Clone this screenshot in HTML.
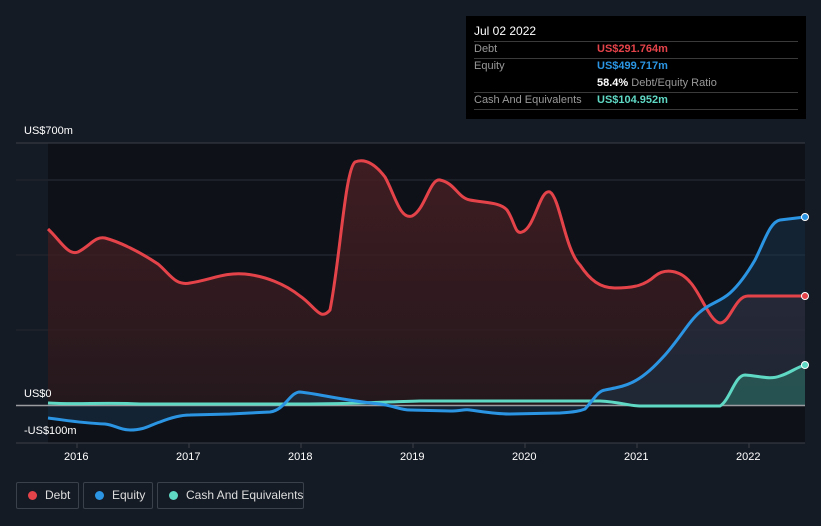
<!DOCTYPE html>
<html><head><meta charset="utf-8"><style>
html,body{margin:0;width:821px;height:526px;overflow:hidden}
body{background:#151b25;font-family:"Liberation Sans",sans-serif;position:relative}
.t{position:absolute;color:#fff;font-size:11px;white-space:nowrap}
.lg{position:absolute;top:482px;height:27px;border:1px solid #3a414b;border-radius:2px;box-sizing:border-box;color:#ddd;font-size:12px;line-height:25px;white-space:nowrap}
.lg i{position:absolute;left:11px;top:8px;width:9px;height:9px;border-radius:50%}
</style></head><body>
<svg width="821" height="526" style="position:absolute;left:0;top:0">
<rect x="48" y="143" width="757" height="300" fill="#0e1218"/>
<line x1="16" y1="143" x2="805" y2="143" stroke="#3a3f47" stroke-width="1"/>
<g stroke="#20252d" stroke-width="1.5"><line x1="16" y1="180" x2="805" y2="180"/><line x1="16" y1="255" x2="805" y2="255"/><line x1="16" y1="330" x2="805" y2="330"/></g>
<line x1="16" y1="443" x2="805" y2="443" stroke="#3a3f47"/>
<g stroke="#3a3f47"><line x1="77" y1="443" x2="77" y2="448"/><line x1="189" y1="443" x2="189" y2="448"/><line x1="301" y1="443" x2="301" y2="448"/><line x1="413" y1="443" x2="413" y2="448"/><line x1="525" y1="443" x2="525" y2="448"/><line x1="637" y1="443" x2="637" y2="448"/><line x1="749" y1="443" x2="749" y2="448"/></g>
<defs><linearGradient id="dg" x1="0" y1="0" x2="0" y2="1"><stop offset="0" stop-color="#4a1f24" stop-opacity=".8"/><stop offset="1" stop-color="#2a1a1e" stop-opacity=".8"/></linearGradient></defs>
<path d="M48,229 C60,240 68,256 78,252 C90,246 95,236 105,238 C120,242 140,252 158,264 C170,274 175,286 190,283 C210,280 225,272 245,274 C265,276 285,284 300,296 C315,306 320,322 330,310 C340,260 345,170 355,162 C365,158 375,164 385,177 C395,195 400,220 412,216 C425,210 430,178 440,180 C455,183 458,198 470,200 C485,203 500,202 507,210 C515,222 515,235 522,232 C535,228 540,188 550,192 C560,198 565,250 580,265 C590,280 600,288 615,288 C635,288 645,285 655,276 C665,268 680,270 690,282 C700,292 710,322 720,323 C730,323 735,296 748,296 L805,296 L805,405 L48,405 Z" fill="url(#dg)"/>
<path d="M48,418 C65,420 80,423 105,424 C115,425 120,430 130,430 C145,430 150,425 160,422 C170,418 180,415 190,415 L230,414 L270,412 C285,410 290,392 300,392 C320,394 340,400 380,404 C395,406 400,410 410,410 L450,411 C460,411 465,409 470,410 C485,412 495,414 510,414 L560,413 C575,412 580,411 585,409 C595,398 598,391 605,390 C620,387 625,386 633,382 C645,376 655,366 665,355 C680,338 690,320 700,312 C710,303 720,302 730,293 C740,284 748,272 755,260 C765,240 770,222 780,220 L805,217 L805,405 L48,405 Z" fill="#1b3a55" fill-opacity=".45"/>
<path d="M720,406 C730,400 735,375 745,375 C760,376 770,380 780,376 C790,373 795,368 805,365 L805,405 L720,405 Z" fill="#2d6f66" fill-opacity=".6"/>
<line x1="16" y1="405.5" x2="805" y2="405.5" stroke="#9a9ca0" stroke-width="1.5"/>
<path d="M48,229 C60,240 68,256 78,252 C90,246 95,236 105,238 C120,242 140,252 158,264 C170,274 175,286 190,283 C210,280 225,272 245,274 C265,276 285,284 300,296 C315,306 320,322 330,310 C340,260 345,170 355,162 C365,158 375,164 385,177 C395,195 400,220 412,216 C425,210 430,178 440,180 C455,183 458,198 470,200 C485,203 500,202 507,210 C515,222 515,235 522,232 C535,228 540,188 550,192 C560,198 565,250 580,265 C590,280 600,288 615,288 C635,288 645,285 655,276 C665,268 680,270 690,282 C700,292 710,322 720,323 C730,323 735,296 748,296 L805,296" fill="none" stroke="#e5434a" stroke-width="3"/>
<path d="M48,403 C80,405 100,402 140,404 L300,404 C350,404 380,402 420,401 L600,401 C620,402 630,406 640,406 L720,406 C730,400 735,375 745,375 C760,376 770,380 780,376 C790,373 795,368 805,365" fill="none" stroke="#5fd8c4" stroke-width="3"/>
<path d="M48,418 C65,420 80,423 105,424 C115,425 120,430 130,430 C145,430 150,425 160,422 C170,418 180,415 190,415 L230,414 L270,412 C285,410 290,392 300,392 C320,394 340,400 380,404 C395,406 400,410 410,410 L450,411 C460,411 465,409 470,410 C485,412 495,414 510,414 L560,413 C575,412 580,411 585,409 C595,398 598,391 605,390 C620,387 625,386 633,382 C645,376 655,366 665,355 C680,338 690,320 700,312 C710,303 720,302 730,293 C740,284 748,272 755,260 C765,240 770,222 780,220 L805,217" fill="none" stroke="#2b95e3" stroke-width="3"/>
<circle cx="805" cy="217" r="3.5" fill="#2b95e3" stroke="#fff"/>
<circle cx="805" cy="296" r="3.5" fill="#e5434a" stroke="#fff"/>
<circle cx="805" cy="365" r="3.5" fill="#5fd8c4" stroke="#fff"/>
</svg>
<div class="t" style="left:24px;top:125px">US$700m</div>
<div class="t" style="left:24px;top:388px">US$0</div>
<div class="t" style="left:24px;top:425px">-US$100m</div>
<div class="t" style="left:64px;top:451px">2016</div>
<div class="t" style="left:176px;top:451px">2017</div>
<div class="t" style="left:288px;top:451px">2018</div>
<div class="t" style="left:400px;top:451px">2019</div>
<div class="t" style="left:512px;top:451px">2020</div>
<div class="t" style="left:624px;top:451px">2021</div>
<div class="t" style="left:736px;top:451px">2022</div>
<div style="position:absolute;left:466px;top:16px;width:340px;height:103px;background:#000;font-size:11px;color:#999;white-space:nowrap">
<div style="position:absolute;left:8px;top:8px;color:#fff;font-size:12px">Jul 02 2022</div>
<div style="position:absolute;left:8px;top:25px;width:324px;border-top:1px solid #3a3a3a"></div>
<div style="position:absolute;left:8px;top:27px">Debt</div><div style="position:absolute;left:131px;top:27px;color:#e5434a;font-weight:bold">US$291.764m</div>
<div style="position:absolute;left:8px;top:42px;width:324px;border-top:1px solid #3a3a3a"></div>
<div style="position:absolute;left:8px;top:44px">Equity</div><div style="position:absolute;left:131px;top:44px;color:#2b95e3;font-weight:bold">US$499.717m</div>
<div style="position:absolute;left:131px;top:61px"><b style="color:#fff">58.4%</b> Debt/Equity Ratio</div>
<div style="position:absolute;left:8px;top:76px;width:324px;border-top:1px solid #3a3a3a"></div>
<div style="position:absolute;left:8px;top:78px">Cash And Equivalents</div><div style="position:absolute;left:131px;top:78px;color:#5fd8c4;font-weight:bold">US$104.952m</div>
<div style="position:absolute;left:8px;top:93px;width:324px;border-top:1px solid #3a3a3a"></div>
</div>
<div class="lg" style="left:16px;width:63px"><i style="background:#e5434a"></i><span style="position:absolute;left:28px">Debt</span></div>
<div class="lg" style="left:83px;width:70px"><i style="background:#2b95e3"></i><span style="position:absolute;left:28px">Equity</span></div>
<div class="lg" style="left:157px;width:147px"><i style="background:#5fd8c4"></i><span style="position:absolute;left:28px">Cash And Equivalents</span></div>
</body></html>
